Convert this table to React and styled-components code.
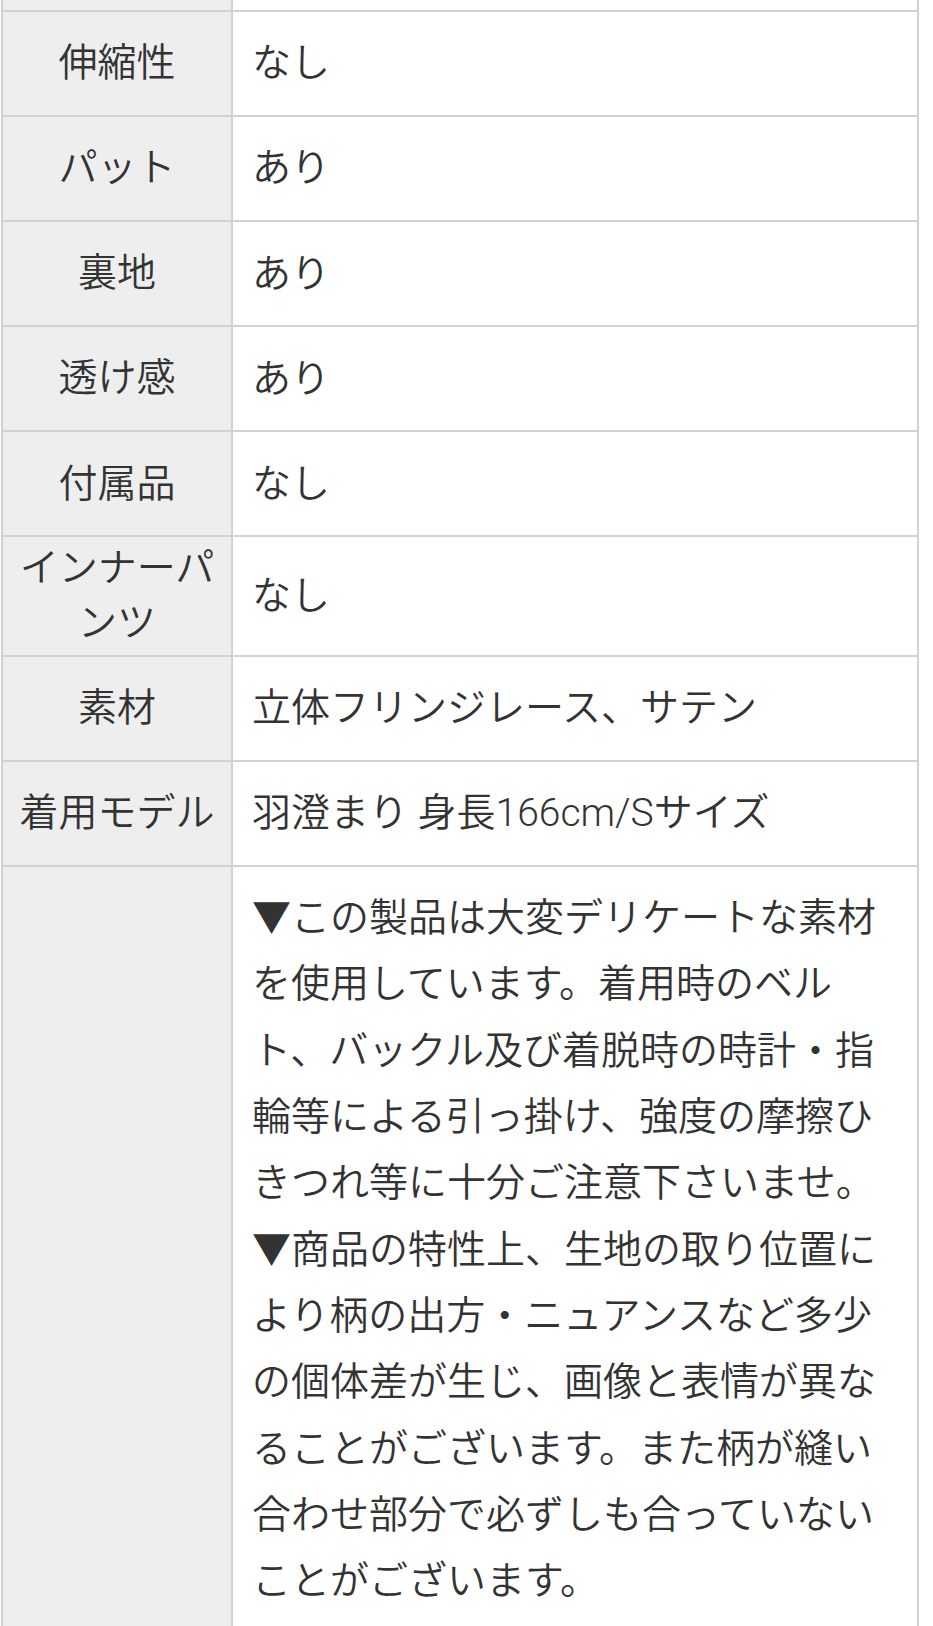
import styled, { createGlobalStyle } from "styled-components";

const GlobalStyle = createGlobalStyle`
  html, body {
    margin: 0;
    padding: 0;
    background: #fff;
  }
  body {
    font-family: Roboto, "Noto Sans CJK JP", sans-serif;
    color: #333;
  }
`;

const Page = styled.div`
  overflow: hidden;
  padding-left: 1px;
`;

const SpecTable = styled.table`
  box-sizing: border-box;
  width: 918px;
  border-collapse: separate;
  border-spacing: 0;
  border-left: 2px solid #d2d2d2;
  font-size: 39px;
  font-weight: 350;
`;

const Label = styled.th`
  box-sizing: border-box;
  width: 230px;
  height: ${(p) => (p.$tail ? "12px" : "auto")};
  padding: ${(p) => (p.$tail ? "0" : "4px 8px")};
  background: #eeeeee;
  border-right: 2px solid #d2d2d2;
  border-bottom: 2px solid #d2d2d2;
  font-weight: inherit;
  line-height: 1.4;
  text-align: center;
  vertical-align: middle;
  color: #333;
`;

const Value = styled.td`
  box-sizing: border-box;
  height: ${(p) => (p.$tail ? "12px" : "auto")};
  padding: ${(p) => (p.$tail ? "0" : "18.4px 21px 18.4px 19px")};
  background: #fff;
  border-right: 2px solid #d2d2d2;
  border-bottom: 2px solid #d2d2d2;
  line-height: 1.7;
  text-align: left;
  vertical-align: middle;
  color: #333;
`;

const specs = [
  ["伸縮性", "なし"],
  ["パット", "あり"],
  ["裏地", "あり"],
  ["透け感", "あり"],
  ["付属品", "なし"],
  ["インナーパンツ", "なし"],
  ["素材", "立体フリンジレース、サテン"],
  ["着用モデル", "羽澄まり 身長166cm/Sサイズ"],
  [
    "",
    "▼この製品は大変デリケートな素材を使用しています。着用時のベルト、バックル及び着脱時の時計・指輪等による引っ掛け、強度の摩擦ひきつれ等に十分ご注意下さいませ。▼商品の特性上、生地の取り位置により柄の出方・ニュアンスなど多少の個体差が生じ、画像と表情が異なることがございます。また柄が縫い合わせ部分で必ずしも合っていないことがございます。",
  ],
];

export default function App() {
  return (
    <Page>
      <GlobalStyle />
      <SpecTable>
        <tbody>
          {/* 上にスクロールした前の行の残り */}
          <tr>
            <Label $tail />
            <Value $tail />
          </tr>
          {specs.map(([label, value], i) => (
            <tr key={i}>
              <Label>{label}</Label>
              <Value>{value}</Value>
            </tr>
          ))}
        </tbody>
      </SpecTable>
    </Page>
  );
}
